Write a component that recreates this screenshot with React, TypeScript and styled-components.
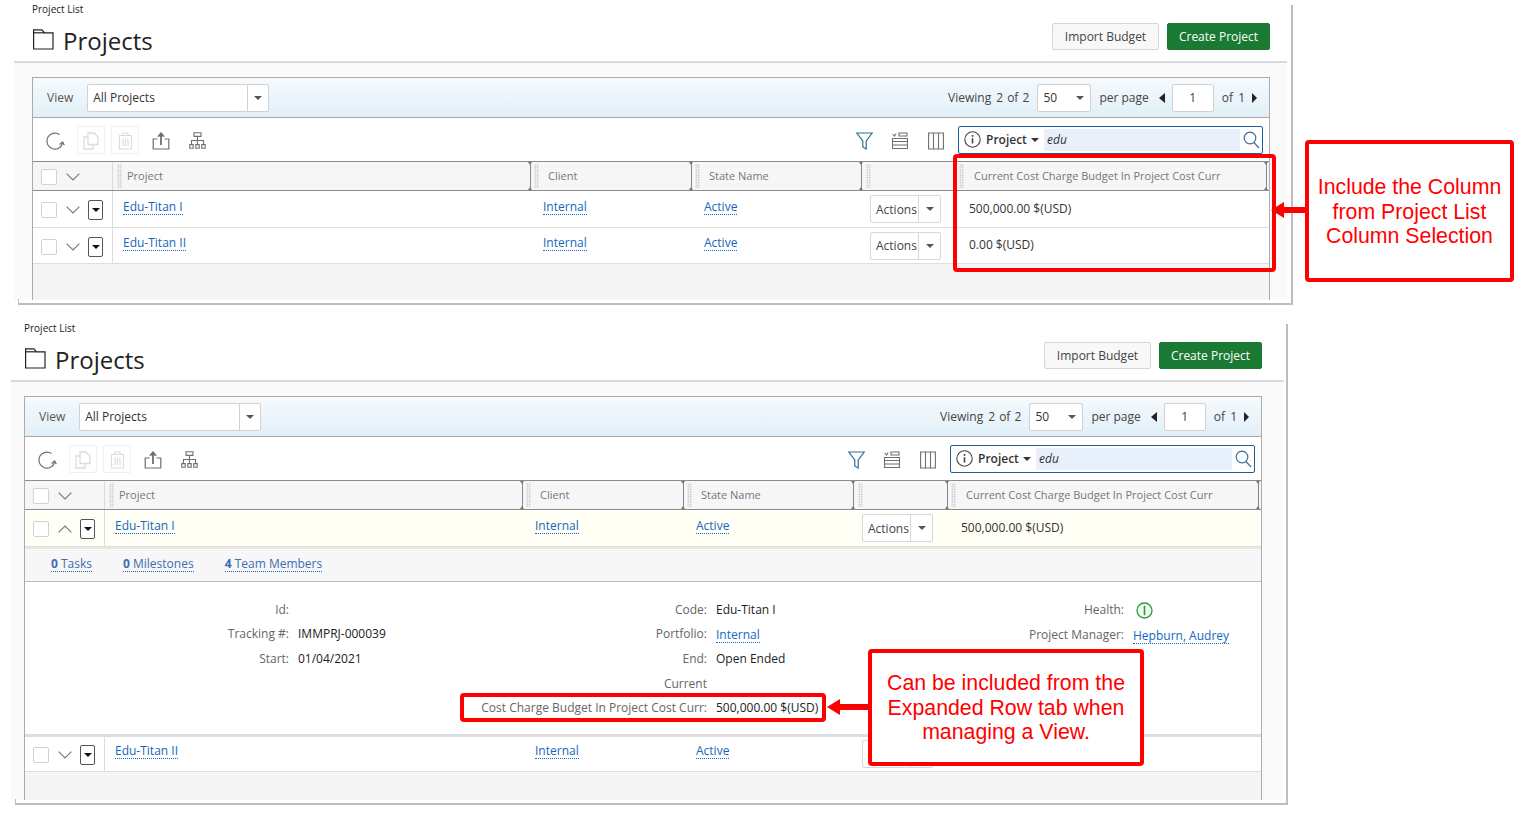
import React from "react";
import styled, { createGlobalStyle } from "styled-components";

const GlobalStyle = createGlobalStyle`
  html, body { margin: 0; padding: 0; background: #fff; }
  body { font-family: "Open Sans", "Liberation Sans", sans-serif; font-size: 12px; color: #333; overflow: hidden; }
  * { box-sizing: border-box; }
`;

const COLS = "80px 420px 161px 170px 94px 1fr";

const Page = styled.div`
  position: relative;
  width: 1526px;
  height: 817px;
  display: flex;
  flex-direction: column;
  gap: 14px;
  overflow: hidden;
`;

const Frame = styled.section<{ $left: number; $width: number; $height: number }>`
  position: relative;
  margin-left: ${(p) => p.$left}px;
  width: ${(p) => p.$width}px;
  height: ${(p) => p.$height}px;
  flex: none;
  &::after {
    content: "";
    position: absolute;
    left: 4px;
    top: 5px;
    right: 0;
    bottom: 0;
    border-right: 2px solid #bdbdbd;
    border-bottom: 2px solid #bdbdbd;
    pointer-events: none;
  }
  &::before {
    content: "";
    position: absolute;
    left: 4px;
    bottom: 0;
    width: 1px;
    height: 6px;
    background: #bdbdbd;
  }
`;

const Sheet = styled.div<{ $right: number }>`
  height: calc(100% - 5px);
  margin-right: ${(p) => p.$right}px;
  display: flex;
  flex-direction: column;
`;

const Head = styled.header<{ $inset: number; $right: number }>`
  height: 63px;
  flex: none;
  padding: 0 ${(p) => p.$right}px 0 ${(p) => p.$inset}px;
  border-bottom: 2px solid #d9d9d9;
  display: flex;
  justify-content: space-between;
`;

const TitleBlock = styled.div`
  display: flex;
  flex-direction: column;
`;

const Crumb = styled.div`
  font-size: 10px;
  line-height: 12px;
  margin-top: 3px;
  color: #222;
`;

const TitleRow = styled.div`
  display: flex;
  align-items: center;
  gap: 9px;
  margin-top: 11px;
  padding-left: 1px;
  svg { display: block; margin-top: -3px; }
`;

const Title = styled.h1`
  margin: 0;
  font-size: 24px;
  line-height: 30px;
  font-weight: 400;
  color: #222;
`;

const HeadActions = styled.div`
  display: flex;
  gap: 8px;
  margin-top: 23px;
`;

const HeadButton = styled.button<{ $primary?: boolean }>`
  height: 27px;
  width: ${(p) => (p.$primary ? 103 : 107)}px;
  padding: 0;
  font: 400 12px "Open Sans", sans-serif;
  border-radius: 2px;
  color: ${(p) => (p.$primary ? "#fff" : "#444")};
  background: ${(p) => (p.$primary ? "#1a7a33" : "#f8f8f8")};
  border: 1px solid ${(p) => (p.$primary ? "#1a7a33" : "#d5d5d5")};
`;

const Body = styled.div<{ $inset: number; $right: number }>`
  flex: 1;
  min-height: 0;
  background: #fafafa;
  padding: 14px ${(p) => p.$right}px 0 ${(p) => p.$inset}px;
  display: flex;
`;

const Card = styled.div`
  flex: 1;
  min-width: 0;
  display: flex;
  flex-direction: column;
  border: 1px solid #ababab;
  border-bottom: 0;
  background: #f5f5f5;
`;

const ViewBar = styled.div`
  height: 40px;
  flex: none;
  display: flex;
  align-items: center;
  justify-content: space-between;
  padding: 0 12px 0 14px;
  border-bottom: 1px solid #a8a8a8;
  background: linear-gradient(#f6fafd, #e1eff8);
  color: #555;
`;

const ViewLeft = styled.div`
  display: flex;
  align-items: center;
  gap: 14px;
`;

const Select = styled.div<{ $width: number }>`
  width: ${(p) => p.$width}px;
  height: 28px;
  display: flex;
  align-items: center;
  justify-content: space-between;
  background: #fff;
  border: 1px solid #d2d2d2;
  border-radius: 2px;
  padding-left: 5px;
  color: #333;
  font-size: 12px;
`;

const SelectCaret = styled.span<{ $split?: boolean }>`
  width: 21px;
  height: 100%;
  display: flex;
  align-items: center;
  justify-content: center;
  border-left: ${(p) => (p.$split ? "1px solid #d2d2d2" : "0")};
`;

const Caret = styled.i<{ $color?: string }>`
  display: block;
  width: 0;
  height: 0;
  border-left: 4px solid transparent;
  border-right: 4px solid transparent;
  border-top: 4px solid ${(p) => p.$color || "#555"};
`;

const Pager = styled.div`
  display: flex;
  align-items: center;
  color: #444;
  font-size: 12px;
`;

const PagerText = styled.span<{ $left?: number; $spread?: number }>`
  margin-left: ${(p) => p.$left || 0}px;
  word-spacing: ${(p) => p.$spread || 0}px;
  white-space: nowrap;
`;

const PagerArrow = styled.i<{ $dir: "left" | "right"; $left: number }>`
  display: block;
  margin-left: ${(p) => p.$left}px;
  width: 0;
  height: 0;
  border-top: 5px solid transparent;
  border-bottom: 5px solid transparent;
  ${(p) => (p.$dir === "left" ? "border-right: 6px solid #222;" : "border-left: 5px solid #222;")}
`;

const PageInput = styled.div`
  width: 42px;
  height: 28px;
  margin-left: 7px;
  background: #fff;
  border: 1px solid #d2d2d2;
  border-radius: 2px;
  display: flex;
  align-items: center;
  justify-content: center;
`;

const PageSize = styled.div`
  margin-left: 8px;
`;

const ToolBar = styled.div`
  height: 43px;
  flex: none;
  display: flex;
  align-items: center;
  gap: 8px;
  padding: 0 6px 0 8px;
  background: #fff;
`;

const ToolPair = styled.div`
  display: flex;
  gap: 6px;
`;

const ToolIcon = styled.span<{ $disabled?: boolean }>`
  width: 28px;
  height: 28px;
  padding-top: 2px;
  display: flex;
  align-items: center;
  justify-content: center;
  border-radius: 2px;
  border: 1px solid ${(p) => (p.$disabled ? "#efefef" : "transparent")};
  svg { display: block; }
`;

const ToolSpacer = styled.div`
  flex: 1;
`;

const Search = styled.div`
  width: 305px;
  height: 28px;
  display: flex;
  align-items: center;
  background: #fff;
  border: 1px solid #1c5d9c;
  border-radius: 2px;
  padding: 2px 0 2px 5px;
`;

const SearchField = styled.span`
  display: flex;
  align-items: center;
  font-weight: 600;
  font-size: 12px;
  color: #333;
  gap: 4px;
  margin-left: 5px;
  width: 58px;
`;

const SearchInput = styled.span`
  width: 196px;
  height: 100%;
  background: #e8f0fb;
  padding-left: 3px;
  display: flex;
  align-items: center;
  font-style: italic;
  font-size: 12px;
  color: #333;
`;

const SearchIcon = styled.span`
  flex: 1;
  display: flex;
  align-items: center;
  justify-content: center;
`;

const HeaderRow = styled.div`
  height: 30px;
  flex: none;
  display: grid;
  grid-template-columns: ${COLS};
  background: #f6f6f6;
  border-top: 1px solid #8c8c8c;
  border-bottom: 1px solid #8c8c8c;
`;

const SelectorCell = styled.div`
  display: flex;
  align-items: center;
  padding: 2px 0 0 8px;
  border-right: 1px solid #dcdcdc;
`;

const HeaderCell = styled.div<{ $textLeft: number; $handleLeft: number }>`
  position: relative;
  display: flex;
  align-items: center;
  padding-left: ${(p) => p.$handleLeft}px;
  font-size: 11px;
  color: #777;
  white-space: nowrap;
  span { margin: -2px 0 0 ${(p) => p.$textLeft}px; }
`;

const GripDots = styled.i`
  display: block;
  flex: none;
  width: 5px;
  height: 24px;
  background-image: radial-gradient(#c9c9c9 45%, transparent 50%);
  background-size: 2.5px 2.5px;
`;

const ResizeBar = styled.b`
  position: absolute;
  top: 0;
  bottom: 0;
  right: 2px;
  width: 1px;
  background: #8b7f95;
  &::before, &::after {
    content: "";
    position: absolute;
    left: -2px;
    border-left: 2.5px solid transparent;
    border-right: 2.5px solid transparent;
  }
  &::before { top: 0; border-top: 3px solid #777; }
  &::after { bottom: 0; border-bottom: 3px solid #777; }
`;

const Row = styled.div<{ $height: number; $open?: boolean }>`
  height: ${(p) => p.$height}px;
  flex: none;
  display: grid;
  grid-template-columns: ${COLS};
  align-items: stretch;
  background: ${(p) => (p.$open ? "#fffff6" : "#fff")};
  border-bottom: 1px solid #dedede;
`;

const Cell = styled.div<{ $left?: number; $lift?: number }>`
  display: flex;
  align-items: center;
  padding-left: ${(p) => p.$left ?? 10}px;
  padding-bottom: ${(p) => p.$lift ?? 0}px;
  white-space: nowrap;
`;

const CheckBox = styled.span`
  display: block;
  flex: none;
  width: 16px;
  height: 16px;
  background: #fff;
  border: 1.5px solid #d2d2d2;
  border-radius: 2px;
`;

const Chevron = styled.svg`
  display: block;
  flex: none;
  margin-left: 9px;
`;

const RowMenu = styled.span`
  flex: none;
  width: 15px;
  height: 20px;
  margin-left: 8px;
  display: flex;
  align-items: center;
  justify-content: center;
  background: #fff;
  border: 1px solid #555;
  border-radius: 2px;
`;

const Link = styled.a`
  color: #1468bd;
  font-size: 12px;
  line-height: 15px;
  border-bottom: 1px dotted #1468bd;
`;

const FieldLink = styled(Link)`
  margin-top: 1px;
`;

const ActionsButton = styled.div`
  width: 71px;
  height: 28px;
  display: flex;
  align-items: center;
  background: #fff;
  border: 1px solid #d8d8d8;
  border-radius: 2px;
  color: #444;
  font-size: 12px;
  padding-left: 5px;
`;

const ActionsCaret = styled.span`
  margin-left: auto;
  width: 22px;
  height: 100%;
  border-left: 1px solid #d8d8d8;
  display: flex;
  align-items: center;
  justify-content: center;
`;

const Tabs = styled.nav`
  height: 35px;
  flex: none;
  display: flex;
  align-items: center;
  gap: 31px;
  padding: 0 0 2px 26px;
  background: #f7f7f7;
  border-top: 2px solid #e8e8e0;
  border-bottom: 1px solid #b5bcc6;
`;

const TabLink = styled.a`
  color: #3c6db4;
  font-size: 12px;
  line-height: 15px;
  border-bottom: 1px dotted #2a62b5;
  b { font-weight: 700; }
`;

const Details = styled.div`
  height: 155px;
  flex: none;
  display: grid;
  grid-template-columns: 418px 417px 1fr;
  align-items: start;
  padding-top: 19.5px;
  background: #fff;
  border-bottom: 3px solid #dedede;
`;

const FieldList = styled.dl`
  margin: 0;
  display: grid;
  grid-template-columns: 264px 1fr;
  column-gap: 9px;
  row-gap: 8px;
  line-height: 16.5px;
  font-size: 12px;
`;

const FieldLabel = styled.dt<{ $tall?: boolean }>`
  text-align: right;
  color: #666;
  white-space: nowrap;
  ${(p) => (p.$tall ? "line-height: 24px; margin-top: -4px;" : "")}
`;

const FieldValue = styled.dd<{ $tall?: boolean }>`
  margin: 0;
  min-height: 16px;
  color: #222;
  white-space: nowrap;
  display: flex;
  align-items: flex-start;
  ${(p) => (p.$tall ? "line-height: 24px; align-self: end;" : "")}
`;

const HealthMark = styled.span`
  display: block;
  margin-left: 3px;
  svg { display: block; }
`;

const Mark = styled.div<{ $x: number; $y: number; $w: number; $h: number }>`
  position: absolute;
  left: ${(p) => p.$x}px;
  top: ${(p) => p.$y}px;
  width: ${(p) => p.$w}px;
  height: ${(p) => p.$h}px;
  border: 4px solid #f00;
  border-radius: 4px;
  pointer-events: none;
`;

const Callout = styled(Mark)`
  background: #fff;
  display: flex;
  justify-content: center;
  padding-top: ${(p) => (p.$w > 250 ? 18 : 31)}px;
  font-family: "Liberation Sans", Arial, sans-serif;
  font-size: 21.3px;
  line-height: 24.6px;
  color: #f00;
  text-align: center;
`;

const Arrow = styled.svg<{ $x: number; $y: number }>`
  position: absolute;
  left: ${(p) => p.$x}px;
  top: ${(p) => p.$y}px;
  display: block;
`;

const S = "#6f6f6f";

const FolderIcon = () => (
  <svg width="21" height="21" viewBox="0 0 21 21" fill="none" stroke="#222" strokeWidth="1.2">
    <path d="M.6 20V.8h8.400l2.400 3H20V20z" />
    <path d="M.6 3.800h10.800" />
  </svg>
);
const RefreshIcon = () => (
  <svg width="20" height="20" viewBox="0 0 20 20" fill="none" stroke={S} strokeWidth="1.2">
    <path d="M14.5 3.6A8 8 0 1 0 17.6 12" />
    <path d="M14.5 13.5l3.2-2.6 1.6 3.4" />
  </svg>
);
const CopyIcon = () => (
  <svg width="16" height="18" viewBox="0 0 16 18" fill="none" stroke="#dcdcdc" strokeWidth="1.3">
    <path d="M5 1h6l4 4v7.5H5z" />
    <path d="M5 5H1v12h9v-4.5" />
  </svg>
);
const TrashIcon = () => (
  <svg width="15" height="18" viewBox="0 0 15 18" fill="none" stroke="#dcdcdc" strokeWidth="1.2">
    <path d="M1 3.5h13M5 3.5V1h5v2.5M1.5 3.5V17h12V3.5M5 6.5V14M7.5 6.5V14M10 6.5V14" />
  </svg>
);
const ExportIcon = () => (
  <svg width="18" height="18" viewBox="0 0 18 18" fill="none" stroke={S} strokeWidth="1.2">
    <path d="M5.5 7H1.2v10h15.6V7h-4.3" />
    <path d="M9 13V2" strokeWidth="1.8" />
    <path d="M5.8 4.6L9 1l3.2 3.6" fill={S} />
  </svg>
);
const TreeIcon = () => (
  <svg width="17" height="17" viewBox="0 0 17 17" fill="none" stroke={S} strokeWidth="1.1">
    <path d="M5 .8h7v3.6H5zM.8 12.6h3.4v3.6H.8zM6.8 12.6h3.4v3.6H6.8zM12.8 12.6h3.4v3.6h-3.4z" />
    <path d="M8.5 4.4v8.2M2.5 12.6V8.5h12v4.1" />
  </svg>
);
const FilterIcon = () => (
  <svg width="17" height="18" viewBox="0 0 17 18" fill="none" stroke="#2f7197" strokeWidth="1.2">
    <path d="M.8 1h15.4l-6 8v8l-3.400-2V9z" />
  </svg>
);
const ListIcon = () => (
  <svg width="16" height="18" viewBox="0 0 16 18" fill="none" stroke={S} strokeWidth="1.1">
    <path d="M.8 2l1.700 2 1.700-2.500M7 1h8v3H7zM.5 6.500h15v3H.5zM.5 9.500v3.500h15V9.500M.5 13v3.500h15V13" />
  </svg>
);
const ColumnsIcon = () => (
  <svg width="16" height="18" viewBox="0 0 16 18" fill="none" stroke={S} strokeWidth="1.1">
    <path d="M.6 1h14.800v16H.6zM5.500 1v16M10.500 1v16" />
  </svg>
);
const InfoIcon = () => (
  <svg width="17" height="17" viewBox="0 0 17 17" fill="none" stroke="#444" strokeWidth="1.1">
    <circle cx="8.500" cy="8.500" r="7.700" />
    <path d="M8.500 7.200v5.300" strokeWidth="1.600" />
    <path d="M8.500 4v1.800" strokeWidth="1.600" />
  </svg>
);
const LensIcon = () => (
  <svg width="17" height="18" viewBox="0 0 17 18" fill="none" stroke="#3c6f99" strokeWidth="1.200">
    <circle cx="7" cy="7" r="5.800" />
    <path d="M11 11.500l5 5.500" />
  </svg>
);
const HealthIcon = () => (
  <svg width="17" height="17" viewBox="0 0 17 17" fill="none" stroke="#2f9a3f" strokeWidth="1.300">
    <circle cx="8.500" cy="8.500" r="7.500" fill="#f1fbf1" />
    <path d="M8.500 3.800v9.400" strokeWidth="1.600" />
  </svg>
);
const Down = () => (
  <Chevron width="14" height="8" viewBox="0 0 14 8" fill="none" stroke="#777" strokeWidth="1.1">
    <path d="M.6.6L7 7l6.400-6.400" />
  </Chevron>
);
const Up = () => (
  <Chevron width="14" height="8" viewBox="0 0 14 8" fill="none" stroke="#777" strokeWidth="1.1">
    <path d="M.6 7.400L7 1l6.400 6.400" />
  </Chevron>
);

const Toolbar = () => (
  <ToolBar>
    <ToolIcon><RefreshIcon /></ToolIcon>
    <ToolPair>
      <ToolIcon $disabled><CopyIcon /></ToolIcon>
      <ToolIcon $disabled><TrashIcon /></ToolIcon>
    </ToolPair>
    <ToolIcon><ExportIcon /></ToolIcon>
    <ToolIcon><TreeIcon /></ToolIcon>
    <ToolSpacer />
    <ToolIcon><FilterIcon /></ToolIcon>
    <ToolIcon><ListIcon /></ToolIcon>
    <ToolIcon><ColumnsIcon /></ToolIcon>
    <Search>
      <InfoIcon />
      <SearchField>Project <Caret $color="#333" /></SearchField>
      <SearchInput>edu</SearchInput>
      <SearchIcon><LensIcon /></SearchIcon>
    </Search>
  </ToolBar>
);

const TableHeader = () => (
  <HeaderRow>
    <SelectorCell>
      <CheckBox />
      <Down />
    </SelectorCell>
    <HeaderCell $handleLeft={4} $textLeft={5}><GripDots /><span>Project</span><ResizeBar /></HeaderCell>
    <HeaderCell $handleLeft={1} $textLeft={9}><GripDots /><span>Client</span><ResizeBar /></HeaderCell>
    <HeaderCell $handleLeft={1} $textLeft={9}><GripDots /><span>State Name</span><ResizeBar /></HeaderCell>
    <HeaderCell $handleLeft={2} $textLeft={0}><GripDots /><ResizeBar /></HeaderCell>
    <HeaderCell $handleLeft={1} $textLeft={10}><GripDots /><span>Current Cost Charge Budget In Project Cost Curr</span><ResizeBar /></HeaderCell>
  </HeaderRow>
);

const DataRow = ({ name, value, height, open, lift = 4 }: { name: string; value?: string; height: number; open?: boolean; lift?: number }) => (
  <Row $height={height} $open={open}>
    <SelectorCell>
      <CheckBox />
      {open ? <Up /> : <Down />}
      <RowMenu><Caret $color="#111" /></RowMenu>
    </SelectorCell>
    <Cell $lift={lift}><Link>{name}</Link></Cell>
    <Cell $lift={lift}><Link>Internal</Link></Cell>
    <Cell $lift={lift}><Link>Active</Link></Cell>
    <Cell $left={6}>
      <ActionsButton>Actions<ActionsCaret><Caret /></ActionsCaret></ActionsButton>
    </Cell>
    <Cell $left={11} $lift={2}>{value}</Cell>
  </Row>
);

const Panel = ({ left, width, height, inset, right, sheetRight, children }: {
  left: number; width: number; height: number; inset: number; right: number; sheetRight: number; children: React.ReactNode;
}) => (
  <Frame $left={left} $width={width} $height={height}>
    <Sheet $right={sheetRight}>
      <Head $inset={inset} $right={right}>
        <TitleBlock>
          <Crumb>Project List</Crumb>
          <TitleRow>
            <FolderIcon />
            <Title>Projects</Title>
          </TitleRow>
        </TitleBlock>
        <HeadActions>
          <HeadButton>Import Budget</HeadButton>
          <HeadButton $primary>Create Project</HeadButton>
        </HeadActions>
      </Head>
      <Body $inset={inset} $right={right}>
        <Card>
          <ViewBar>
            <ViewLeft>
              View
              <Select $width={182}>All Projects<SelectCaret $split><Caret /></SelectCaret></Select>
            </ViewLeft>
            <Pager>
              <PagerText>Viewing</PagerText>
              <PagerText $left={5} $spread={1}>2 of 2</PagerText>
              <PageSize><Select $width={54}>50<SelectCaret><Caret /></SelectCaret></Select></PageSize>
              <PagerText $left={8}>per page</PagerText>
              <PagerArrow $dir="left" $left={10} />
              <PageInput>1</PageInput>
              <PagerText $left={8} $spread={2}>of 1</PagerText>
              <PagerArrow $dir="right" $left={7} />
            </Pager>
          </ViewBar>
          <Toolbar />
          <TableHeader />
          {children}
        </Card>
      </Body>
    </Sheet>
  </Frame>
);

export default function App() {
  return (
    <Page>
      <GlobalStyle />
      <Panel left={14} width={1279} height={305} inset={18} right={17} sheetRight={6}>
        <DataRow name="Edu-Titan I" value="500,000.00 $(USD)" height={37} />
        <DataRow name="Edu-Titan II" value="0.00 $(USD)" height={36} lift={6} />
      </Panel>
      <Panel left={11} width={1277} height={486} inset={13} right={22} sheetRight={4}>
        <DataRow name="Edu-Titan I" value="500,000.00 $(USD)" height={37} open />
        <Tabs>
          <TabLink><b>0</b> Tasks</TabLink>
          <TabLink><b>0</b> Milestones</TabLink>
          <TabLink><b>4</b> Team Members</TabLink>
        </Tabs>
        <Details>
          <FieldList>
            <FieldLabel>Id:</FieldLabel><FieldValue />
            <FieldLabel>Tracking #:</FieldLabel><FieldValue>IMMPRJ-000039</FieldValue>
            <FieldLabel>Start:</FieldLabel><FieldValue>01/04/2021</FieldValue>
          </FieldList>
          <FieldList>
            <FieldLabel>Code:</FieldLabel><FieldValue>Edu-Titan I</FieldValue>
            <FieldLabel>Portfolio:</FieldLabel><FieldValue><FieldLink>Internal</FieldLink></FieldValue>
            <FieldLabel>End:</FieldLabel><FieldValue>Open Ended</FieldValue>
            <FieldLabel $tall>Current<br />Cost Charge Budget In Project Cost Curr:</FieldLabel>
            <FieldValue $tall>500,000.00 $(USD)</FieldValue>
          </FieldList>
          <FieldList>
            <FieldLabel>Health:</FieldLabel><FieldValue><HealthMark><HealthIcon /></HealthMark></FieldValue>
            <FieldLabel>Project Manager:</FieldLabel><FieldValue><FieldLink>Hepburn, Audrey</FieldLink></FieldValue>
          </FieldList>
        </Details>
        <DataRow name="Edu-Titan II" height={35} lift={6} />
      </Panel>

      <Mark $x={953} $y={154} $w={323} $h={118} />
      <Arrow $x={1271} $y={201} width="36" height="18" viewBox="0 0 36 18"><path d="M0 9L13 1v5h23v6H13v5z" fill="#f00" /></Arrow>
      <Callout $x={1305} $y={140} $w={209} $h={142}>
        <div>Include the Column<br />from Project List<br />Column Selection</div>
      </Callout>

      <Mark $x={460} $y={693} $w={366} $h={29} />
      <Arrow $x={827} $y={698} width="42" height="18" viewBox="0 0 42 18"><path d="M0 9L13 1v5h29v6H13v5z" fill="#f00" /></Arrow>
      <Callout $x={868} $y={649} $w={276} $h={117}>
        <div>Can be included from the<br />Expanded Row tab when<br />managing a View.</div>
      </Callout>
    </Page>
  );
}
